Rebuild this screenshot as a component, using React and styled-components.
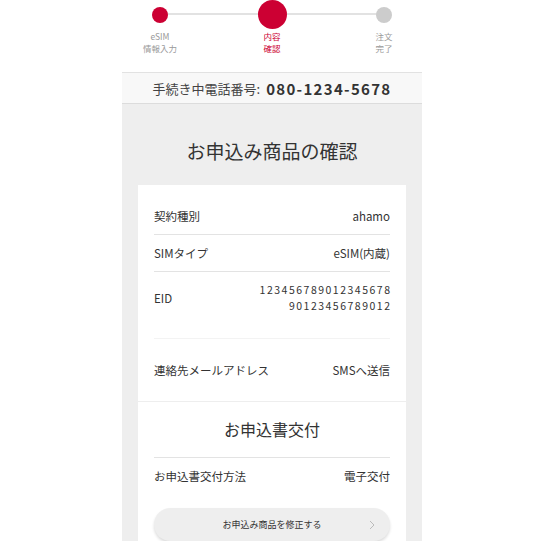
import React from "react";
import styled, { createGlobalStyle } from "styled-components";

const GlobalStyle = createGlobalStyle`
  body {
    margin: 0;
    background: #fff;
    font-family: "Noto Sans CJK JP", "Noto Sans", sans-serif;
    color: #333;
  }
`;

const Page = styled.div`
  width: 300px;
  margin: 0 auto 0 122px;
  background: #eeeeee;
`;

const Stepper = styled.div`
  position: relative;
  display: grid;
  grid-template-columns: 76px 76px 76px;
  justify-content: space-between;
  height: 72px;
  background: #fff;

  &::before {
    content: "";
    position: absolute;
    left: 38px;
    right: 38px;
    top: 13px;
    height: 2px;
    background: #e2e2e2;
  }
`;

const Step = styled.div`
  position: relative;
  display: flex;
  flex-direction: column;
  align-items: center;
`;

const DotBox = styled.div`
  height: 29px;
  display: flex;
  align-items: center;
`;

const Dot = styled.div`
  width: ${({ $big }) => ($big ? "29px" : "16px")};
  height: ${({ $big }) => ($big ? "29px" : "16px")};
  border-radius: 50%;
  background: ${({ $color }) => $color};
`;

const StepLabel = styled.div`
  margin-top: 1px;
  font-size: 8.5px;
  line-height: 12px;
  text-align: center;
  color: ${({ $active }) => ($active ? "#cc0033" : "#999")};
`;

const PhoneBar = styled.div`
  display: flex;
  align-items: center;
  justify-content: center;
  height: 30px;
  background: #f8f8f8;
  border-top: 1px solid #e2e2e2;
  border-bottom: 1px solid #dcdcdc;
`;

const PhoneLabel = styled.span`
  font-size: 13px;
  color: #444;
`;

const PhoneNumber = styled.span`
  margin-left: 6px;
  font-size: 15px;
  font-weight: 700;
  letter-spacing: 1.3px;
  color: #333;
`;

const Title = styled.h1`
  margin: 0;
  padding: 33px 0 20px;
  font-size: 19px;
  line-height: 28px;
  font-weight: 400;
  text-align: center;
  color: #333;
`;

const Card = styled.div`
  margin: ${({ $gap }) => ($gap ? "1px 16px 0" : "0 16px")};
  padding: ${({ $top }) => $top || "0"} 16px 0;
  background: #fff;
`;

const Row = styled.div`
  display: flex;
  justify-content: space-between;
  align-items: center;
  padding: ${({ $pad }) => $pad || "9px 0"};
  border-bottom: ${({ $line }) => ($line ? `1px solid ${$line}` : "none")};
  font-size: 11.5px;
  line-height: 18px;
`;

const Value = styled.div`
  text-align: right;
`;

const Eid = styled.div`
  text-align: right;
  font-size: 10.5px;
  line-height: 16px;
  letter-spacing: 1.5px;
  margin-right: -1.5px;
`;

const SubTitle = styled.h2`
  margin: 0;
  padding: 15px 0 16px;
  font-size: 16px;
  line-height: 24px;
  font-weight: 400;
  text-align: center;
  border-bottom: 1px solid #e3e3e3;
`;

const EditButton = styled.button`
  position: relative;
  display: flex;
  align-items: center;
  justify-content: center;
  width: 100%;
  height: 33px;
  margin-top: 14px;
  border: none;
  border-radius: 17px;
  background: #eeeeee;
  box-shadow: 0 2px 3px rgba(0, 0, 0, 0.14);
  font-family: inherit;
  font-size: 9px;
  color: #333;
`;

const Chevron = styled.svg`
  position: absolute;
  right: 15px;
  top: 50%;
  margin-top: -5px;
`;

const steps = [
  { label: ["eSIM", "情報入力"], color: "#cc0033" },
  { label: ["内容", "確認"], color: "#cc0033", big: true, active: true },
  { label: ["注文", "完了"], color: "#cccccc" },
];

export default function App() {
  return (
    <>
      <GlobalStyle />
      <Page>
        <Stepper>
          {steps.map((s, i) => (
            <Step key={i}>
              <DotBox>
                <Dot $big={s.big} $color={s.color} />
              </DotBox>
              <StepLabel $active={s.active}>
                {s.label[0]}
                <br />
                {s.label[1]}
              </StepLabel>
            </Step>
          ))}
        </Stepper>

        <PhoneBar>
          <PhoneLabel>手続き中電話番号:</PhoneLabel>
          <PhoneNumber>080-1234-5678</PhoneNumber>
        </PhoneBar>

        <Title>お申込み商品の確認</Title>

        <Card $top="13px">
          <Row $line="#e3e3e3">
            <span>契約種別</span>
            <Value>ahamo</Value>
          </Row>
          <Row $line="#e3e3e3">
            <span>SIMタイプ</span>
            <Value>eSIM(内蔵)</Value>
          </Row>
          <Row $line="#f3f3f3" $pad="10px 0 24px">
            <span>EID</span>
            <Eid>
              123456789012345678
              <br />
              90123456789012
            </Eid>
          </Row>
          <Row $pad="22px 0">
            <span>連絡先メールアドレス</span>
            <Value>SMSへ送信</Value>
          </Row>
        </Card>

        <Card $gap>
          <SubTitle>お申込書交付</SubTitle>
          <Row>
            <span>お申込書交付方法</span>
            <Value>電子交付</Value>
          </Row>
          <EditButton>
            お申込み商品を修正する
            <Chevron width="6" height="10" viewBox="0 0 6 10">
              <path d="M1 1l4 4-4 4" fill="none" stroke="#bbb" strokeWidth="1" />
            </Chevron>
          </EditButton>
        </Card>
      </Page>
    </>
  );
}
